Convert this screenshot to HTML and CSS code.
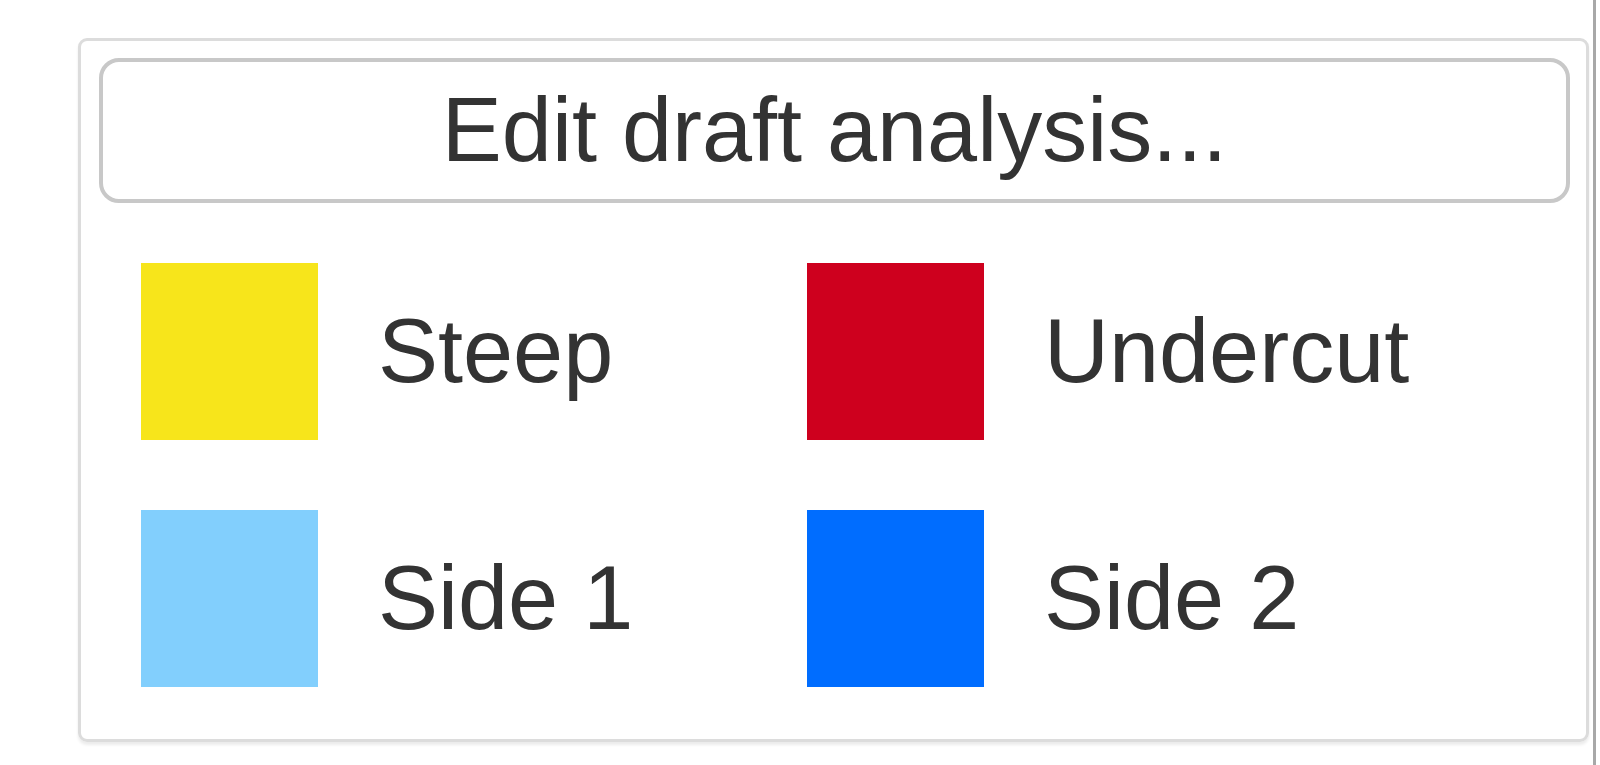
FILE: index.html
```html
<!DOCTYPE html>
<html lang="en">
<head>
    <meta charset="UTF-8">
    <meta name="viewport" content="width=device-width, initial-scale=1.0">
    <title>Draft analysis</title>
    <link rel="stylesheet" href="styles.css">
</head>
<body>
    <div class="page">
        <div class="main">
            <div class="panel">
                <button class="btn">Edit draft analysis...</button>
                <div class="legend">
                    <div class="legend-item"><span class="swatch steep"></span><span>Steep</span></div>
                    <div class="legend-item"><span class="swatch undercut"></span><span>Undercut</span></div>
                    <div class="legend-item"><span class="swatch side1"></span><span>Side 1</span></div>
                    <div class="legend-item"><span class="swatch side2"></span><span>Side 2</span></div>
                </div>
            </div>
        </div>
        <div class="divider"></div>
    </div>
</body>
</html>
```

FILE: styles.css
```css
body {
    margin: 0;
    font-family: "Liberation Sans", Arial, sans-serif;
    color: #333;
    background: #fff;
}
.page {
    display: flex;
    height: 765px;
}
.main {
    flex: 1;
    padding: 38px 4px 0 78px;
}
.divider {
    width: 3px;
    margin-right: 4px;
    background-color: #a8a8a8;
}
.panel {
    border: 3px solid #dcdcdc;
    border-radius: 9px;
    box-shadow: 0 3px 3px rgba(0, 0, 0, 0.08);
    padding: 17px 16px 52px 18px;
}
.btn {
    display: block;
    width: 100%;
    height: 145px;
    border: 4px solid #c8c8c8;
    border-radius: 20px;
    background: #fff;
    color: #333;
    font-family: inherit;
    font-size: 90px;
    padding: 0;
}
.legend {
    display: grid;
    grid-template-columns: 666px 1fr;
    row-gap: 70px;
    margin-top: 60px;
    padding-left: 42px;
}
.legend-item {
    display: flex;
    align-items: center;
    gap: 60px;
    font-size: 90px;
}
.swatch {
    width: 177px;
    height: 177px;
}
.steep {
    background-color: #f7e51b;
}
.undercut {
    background-color: #ce001e;
}
.side1 {
    background-color: #82cffd;
}
.side2 {
    background-color: #006dff;
}
```
